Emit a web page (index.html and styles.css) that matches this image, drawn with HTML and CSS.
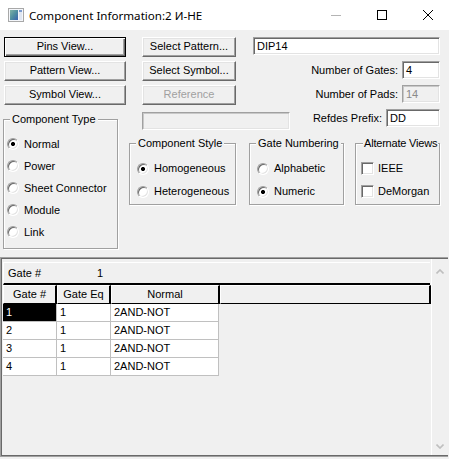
FILE: index.html
```html
<!DOCTYPE html>
<html>
<head>
<meta charset="utf-8">
<title>Component Information</title>
<link rel="stylesheet" href="styles.css">
</head>
<body>
<div class="titlebar">
  <svg class="appicon" width="16" height="14" viewBox="0 0 16 14">
    <defs>
      <linearGradient id="ig" x1="0" y1="0" x2="1" y2="1">
        <stop offset="0" stop-color="#7fb3a6"/>
        <stop offset="0.5" stop-color="#4f8fa0"/>
        <stop offset="1" stop-color="#3a63b0"/>
      </linearGradient>
    </defs>
    <rect x="0.5" y="0.5" width="15" height="13" fill="#f4f6fa" stroke="#a8a8a8"/>
    <rect x="2" y="2" width="8" height="10" fill="url(#ig)"/>
    <rect x="11" y="2" width="3" height="10" fill="#dfe6f2"/>
    <rect x="11" y="2" width="3" height="2" fill="#7b9bd0"/>
  </svg>
  <span class="title">Component Information:2 И-НЕ</span>
  <div class="caps">
    <span class="cap"><svg width="10" height="10" viewBox="0 0 10 10"><line x1="0" y1="5.5" x2="10" y2="5.5" stroke="#b4b4b4"/></svg></span>
    <span class="cap"><svg width="10" height="10" viewBox="0 0 10 10"><rect x="0.5" y="0.5" width="9" height="9" fill="none" stroke="#000"/></svg></span>
    <span class="cap"><svg width="10" height="10" viewBox="0 0 10 10"><path d="M0 0L10 10M10 0L0 10" stroke="#000" stroke-width="1"/></svg></span>
  </div>
</div>
<div class="client">
  <div class="top">
    <div class="row">
      <div class="btn default wl">Pins View...</div>
      <div class="btn wm">Select Pattern...</div>
      <div class="tb pattern">DIP14</div>
    </div>
    <div class="row">
      <div class="btn wl">Pattern View...</div>
      <div class="btn wm">Select Symbol...</div>
      <div class="field"><span class="lbl">Number of Gates:</span><div class="tb small">4</div></div>
    </div>
    <div class="row">
      <div class="btn wl">Symbol View...</div>
      <div class="btn wm disabled">Reference</div>
      <div class="field"><span class="lbl">Number of Pads:</span><div class="tb small off">14</div></div>
    </div>
    <div class="lower">
      <fieldset class="grp ctype">
        <legend>Component Type</legend>
        <div class="opt"><span class="radio on"></span>Normal</div>
        <div class="opt"><span class="radio"></span>Power</div>
        <div class="opt"><span class="radio"></span>Sheet Connector</div>
        <div class="opt"><span class="radio"></span>Module</div>
        <div class="opt"><span class="radio"></span>Link</div>
      </fieldset>
      <div class="rightcol">
        <div class="rowd">
          <div class="tb off empty"></div>
          <div class="field"><span class="lbl">Refdes Prefix:</span><div class="tb refdes">DD</div></div>
        </div>
        <div class="groups">
          <fieldset class="grp cstyle">
            <legend>Component Style</legend>
            <div class="opt"><span class="radio on"></span>Homogeneous</div>
            <div class="opt"><span class="radio"></span>Heterogeneous</div>
          </fieldset>
          <fieldset class="grp gnum">
            <legend>Gate Numbering</legend>
            <div class="opt"><span class="radio"></span>Alphabetic</div>
            <div class="opt"><span class="radio on"></span>Numeric</div>
          </fieldset>
          <fieldset class="grp alt">
            <legend>Alternate Views</legend>
            <div class="opt"><span class="check"></span>IEEE</div>
            <div class="opt"><span class="check"></span>DeMorgan</div>
          </fieldset>
        </div>
      </div>
    </div>
  </div>
  <div class="panel">
    <div class="panel-in">
      <div class="gridarea">
        <div class="gatebar"><span class="gl">Gate #</span><span class="gv">1</span></div>
        <div class="hdr">
          <div class="hc c1">Gate #</div>
          <div class="hc c2">Gate Eq</div>
          <div class="hc c3">Normal</div>
          <div class="hc c4"></div>
        </div>
        <div class="dr"><div class="dc c1 sel">1</div><div class="dc c2">1</div><div class="dc c3">2AND-NOT</div></div>
        <div class="dr"><div class="dc c1">2</div><div class="dc c2">1</div><div class="dc c3">2AND-NOT</div></div>
        <div class="dr"><div class="dc c1">3</div><div class="dc c2">1</div><div class="dc c3">2AND-NOT</div></div>
        <div class="dr"><div class="dc c1">4</div><div class="dc c2">1</div><div class="dc c3">2AND-NOT</div></div>
      </div>
      <div class="vscroll">
        <svg width="8" height="5" viewBox="0 0 8 5"><polyline points="0.5,4.5 4,1 7.5,4.5" fill="none" stroke="#bfbfbf" stroke-width="1.6"/></svg>
        <svg width="8" height="5" viewBox="0 0 8 5"><polyline points="0.5,0.5 4,4 7.5,0.5" fill="none" stroke="#bfbfbf" stroke-width="1.6"/></svg>
      </div>
    </div>
  </div>
</div>
</body>
</html>
```
FILE: styles.css
```css
* { box-sizing: border-box; }
html, body { margin: 0; padding: 0; }
body {
  width: 449px;
  height: 459px;
  overflow: hidden;
  background: #f0f0f0;
  font-family: "Liberation Sans", Arial, sans-serif;
  font-size: 11px;
  line-height: 13px;
  color: #000;
}

/* title bar */
.titlebar {
  width: 451px;
  height: 30px;
  background: #fff;
  display: flex;
  align-items: center;
}
.appicon { margin-left: 8px; flex: none; }
.title {
  margin-left: 5px;
  font-family: "Noto Sans", "Noto Sans CJK SC", sans-serif;
  font-size: 11.6px;
  color: #000;
}
.caps { margin-left: auto; display: flex; height: 30px; }
.cap { width: 46px; display: flex; align-items: center; justify-content: center; }

/* client */
.client { height: 429px; display: flex; flex-direction: column; }
.top { height: 227px; padding: 7px 9px 0 4px; flex: none; }
.row { display: flex; align-items: flex-start; height: 20px; margin-bottom: 4px; }

.btn {
  height: 20px;
  display: flex;
  align-items: center;
  justify-content: center;
  background: #f0f0f0;
  border: 1px solid;
  border-color: #fff #696969 #696969 #fff;
  box-shadow: inset -1px -1px #a0a0a0, inset 1px 1px #e3e3e3;
  padding-bottom: 1px;
}
.btn.default {
  border-color: #000;
  box-shadow: inset 1px 1px #fff, inset -1px -1px #696969, inset -2px -2px #a0a0a0;
}
.btn.disabled { color: #a0a0a0; }
.wl { width: 122px; }
.wm { width: 94px; margin-left: 16px; }

.tb {
  height: 18px;
  background: #fff;
  border: 1px solid;
  border-color: #a0a0a0 #fff #fff #a0a0a0;
  box-shadow: inset 1px 1px #696969, inset -1px -1px #e3e3e3;
  padding: 2px 0 0 3px;
}
.tb.off { background: #f0f0f0; color: #8a8a8a; box-shadow: inset 1px 1px #c8c8c8, inset -1px -1px #e3e3e3; }
.tb.pattern { margin-left: 17px; width: 187px; }
.tb.small { width: 38px; }
.tb.refdes { width: 54px; }
.tb.empty { margin-top: 3px; margin-left: 13px; width: 148px; }

.field { margin-left: auto; display: flex; align-items: center; }
.lbl { margin-right: 4px; }

/* lower dialog area */
.lower { display: flex; }
.rightcol { flex: 1; margin-left: 11px; }
.rowd { display: flex; height: 21px; align-items: flex-start; }
.groups { display: flex; margin-top: 7px; }

fieldset.grp {
  margin: 0;
  padding: 7px 0 0 0;
  min-width: 0;
  border: 1px solid #a0a0a0;
  box-shadow: inset 1px 1px #fff, 1px 1px #fff;
}
fieldset.grp legend {
  margin-left: 6px;
  padding: 0 2px;
  height: 13px;
  line-height: 13px;
  background: #f0f0f0;
  white-space: nowrap;
}
fieldset.grp.ctype { margin: 4px 0 0 -1px; width: 115px; height: 136px; }
fieldset.grp.cstyle { width: 107px; height: 68px; }
fieldset.grp.gnum { width: 95px; height: 68px; margin-left: 13px; }
fieldset.grp.alt { width: 85px; height: 68px; margin-left: 11px; }
fieldset.grp.alt legend { margin-left: 7px; padding: 0 1px; letter-spacing: -0.2px; }

.opt { display: flex; align-items: center; height: 23px; padding-left: 7px; white-space: nowrap; }
.ctype .opt { height: 22px; padding-left: 3px; }
.alt .opt { padding-left: 5px; }

.radio {
  width: 12px;
  height: 12px;
  flex: none;
  border-radius: 50%;
  margin-right: 5px;
  background: #fff;
  border: 1px solid;
  border-color: #a0a0a0 #fff #fff #a0a0a0;
  box-shadow: inset 1px 1px #696969, inset -1px -1px #e3e3e3;
}
.radio.on { background: radial-gradient(circle at 50% 50%, #000 0, #000 1.8px, #fff 2.3px); }

.check {
  width: 13px;
  height: 13px;
  flex: none;
  margin-right: 4px;
  background: #fff;
  border: 1px solid;
  border-color: #a0a0a0 #fff #fff #a0a0a0;
  box-shadow: inset 1px 1px #696969, inset -1px -1px #e3e3e3;
}

/* bottom panel */
.panel {
  width: 448px;
  height: 200px;
  flex: none;
  border-top: 1px solid #a0a0a0;
  border-left: 1px solid #a0a0a0;
  border-bottom: 1px solid #a0a0a0;
}
.panel-in {
  height: 100%;
  display: flex;
  border-top: 1px solid #696969;
  border-left: 1px solid #696969;
  border-bottom: 1px solid #696969;
}
.gridarea { flex: 1; padding: 3px 0 0 1px; background: #f0f0f0; }
.gatebar {
  width: 427px;
  height: 23px;
  display: flex;
  align-items: center;
  border-top: 1px solid #fff;
  border-left: 1px solid #fff;
  border-bottom: 2px solid #000;
}
.gl { padding-left: 4px; width: 93px; }

.hdr { display: flex; height: 19px; }
.hc {
  height: 19px;
  background: #f0f0f0;
  border-top: 1px solid #fff;
  border-left: 1px solid #fff;
  border-right: 2px solid #000;
  border-bottom: 1px solid #000;
  text-align: center;
  line-height: 16px;
}
.hc.c1 { width: 54px; }
.hc.c2 { width: 54px; }
.hc.c3 { width: 109px; }
.hc.c4 { flex: 1; }

.dr { display: flex; height: 18px; }
.dc {
  height: 18px;
  background: #fff;
  border-right: 1px solid #c0c0c0;
  border-bottom: 1px solid #c0c0c0;
  padding-left: 3px;
  line-height: 17px;
}
.dc.c1 { width: 54px; }
.dc.c2 { width: 54px; }
.dc.c3 { width: 108px; }
.dc.sel { background: #000; color: #fff; }

.vscroll {
  width: 17px;
  flex: none;
  background: #f0f0f0;
  border-left: 1px solid #fff;
  display: flex;
  flex-direction: column;
  justify-content: space-between;
  align-items: center;
  padding: 10px 0 6px;
}
```
